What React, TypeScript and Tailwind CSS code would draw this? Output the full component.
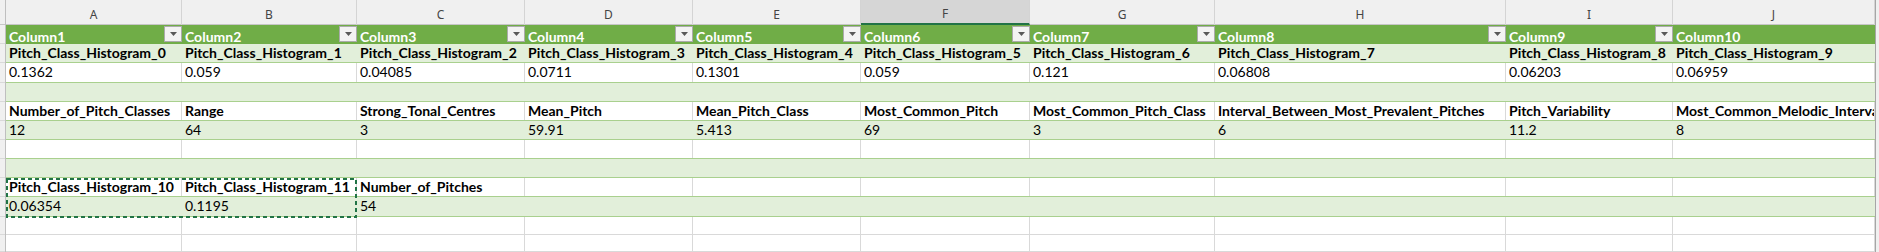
const colW = 'grid-cols-[176px_175px_168px_168px_168px_169px_185px_291px_167px_202px]';

const letters = ['A', 'B', 'C', 'D', 'E', 'F', 'G', 'H', 'I', 'J'];

type Row = {
    cells: string[];
    kind: 'band' | 'plain' | 'sheet';
    bold?: boolean;
    h: string;
};

const rows: Row[] = [
    {
        kind: 'band',
        bold: true,
        h: 'h-[19px]',
        cells: [
            'Pitch_Class_Histogram_0', 'Pitch_Class_Histogram_1', 'Pitch_Class_Histogram_2', 'Pitch_Class_Histogram_3',
            'Pitch_Class_Histogram_4', 'Pitch_Class_Histogram_5', 'Pitch_Class_Histogram_6', 'Pitch_Class_Histogram_7',
            'Pitch_Class_Histogram_8', 'Pitch_Class_Histogram_9',
        ],
    },
    {
        kind: 'plain',
        h: 'h-[20px]',
        cells: ['0.1362', '0.059', '0.04085', '0.0711', '0.1301', '0.059', '0.121', '0.06808', '0.06203', '0.06959'],
    },
    { kind: 'band', h: 'h-[19px]', cells: [] },
    {
        kind: 'plain',
        bold: true,
        h: 'h-[19px]',
        cells: [
            'Number_of_Pitch_Classes', 'Range', 'Strong_Tonal_Centres', 'Mean_Pitch', 'Mean_Pitch_Class',
            'Most_Common_Pitch', 'Most_Common_Pitch_Class', 'Interval_Between_Most_Prevalent_Pitches',
            'Pitch_Variability', 'Most_Common_Melodic_Interval',
        ],
    },
    { kind: 'band', h: 'h-[19px]', cells: ['12', '64', '3', '59.91', '5.413', '69', '3', '6', '11.2', '8'] },
    { kind: 'plain', h: 'h-[19px]', cells: [] },
    { kind: 'band', h: 'h-[19px]', cells: [] },
    {
        kind: 'plain',
        bold: true,
        h: 'h-[19px]',
        cells: ['Pitch_Class_Histogram_10', 'Pitch_Class_Histogram_11', 'Number_of_Pitches'],
    },
    { kind: 'band', h: 'h-[20px]', cells: ['0.06354', '0.1195', '54'] },
    { kind: 'sheet', h: 'h-[18px]', cells: [] },
    { kind: 'sheet', h: 'h-[17px]', cells: [] },
];

const FilterButton = () => (
    <div className="mt-[1px] flex h-[16px] w-[18px] shrink-0 items-center justify-center self-start border border-[#ababab] bg-[#f3f3f3]">
        <svg width="7" height="4" viewBox="0 0 7 4">
            <path d="M0 0h7L3.5 4z" fill="#595959" />
        </svg>
    </div>
);

const rowClass = (kind: Row['kind']) => {
    if (kind === 'band') return 'bg-[#e2efda] border-b border-[#a9d08e]';
    if (kind === 'plain') return 'bg-white border-b border-[#a9d08e]';
    return 'bg-white border-b border-[#d9d9d9]';
};

export default function App() {
    return (
        <div className="flex h-[252px] w-[1879px] overflow-hidden bg-white font-['Lato',sans-serif] text-[14px] text-black">
            {/* row header strip, mostly scrolled off */}
            <div className="flex w-[6px] shrink-0 flex-col border-r border-[#bfbfbf] bg-[#f0f0f0]">
                <div className="h-[25px] shrink-0 border-b border-[#c6c6c6]" />
                {[...Array(12)].map((_, i) => (
                    <div key={i} className={`${i === 0 ? 'h-[19px]' : rows[i - 1]?.h ?? 'h-[19px]'} shrink-0 border-b border-[#d9d9d9]`} />
                ))}
            </div>

            <div className="relative flex w-[1869px] shrink-0 flex-col">
                {/* column letters */}
                <div className={`grid ${colW} h-[25px] shrink-0 border-b border-[#c6c6c6] bg-[#f0f0f0]`}>
                    {letters.map((l) => (
                        <div
                            key={l}
                            className={`flex items-center justify-center border-r border-[#d4d4d4] pt-[5px] font-['Noto_Sans',sans-serif] text-[12px] text-[#444] ${
                                l === 'F' ? 'border-b-2 border-b-[#217346] bg-[#d6d6d6]' : ''
                            }`}
                        >
                            {l}
                        </div>
                    ))}
                </div>

                {/* table header */}
                <div className={`grid ${colW} h-[19px] shrink-0 bg-[#70ad47]`}>
                    {letters.map((l, i) => (
                        <div key={l} className="flex overflow-hidden">
                            <span className="flex-1 truncate pl-[3px] pt-[1px] font-bold text-white">Column{i + 1}</span>
                            {i < 9 && <FilterButton />}
                        </div>
                    ))}
                </div>

                {rows.map((row, r) => (
                    <div key={r} className={`grid ${colW} ${row.h} shrink-0 ${rowClass(row.kind)}`}>
                        {letters.map((l, c) => (
                            <div
                                key={l}
                                className={`overflow-hidden whitespace-nowrap pl-[3px] leading-[18px] ${row.bold ? 'font-bold' : ''} ${
                                    row.kind === 'band' ? '' : 'border-r border-[#d9d9d9]'
                                }`}
                            >
                                {row.cells[c] ?? ''}
                            </div>
                        ))}
                    </div>
                ))}

                {/* copy marquee around A9:B10 */}
                <svg className="pointer-events-none absolute left-0 top-[178px]" width="352" height="40">
                    <rect x="1" y="1" width="349" height="38" fill="none" stroke="#217346" strokeWidth="2" strokeDasharray="4 3" />
                </svg>
            </div>

            {/* edge of scroll area */}
            <div className="w-[4px] shrink-0 border-l border-[#a6a6a6] bg-[#f0f0f0]" />
        </div>
    );
}
